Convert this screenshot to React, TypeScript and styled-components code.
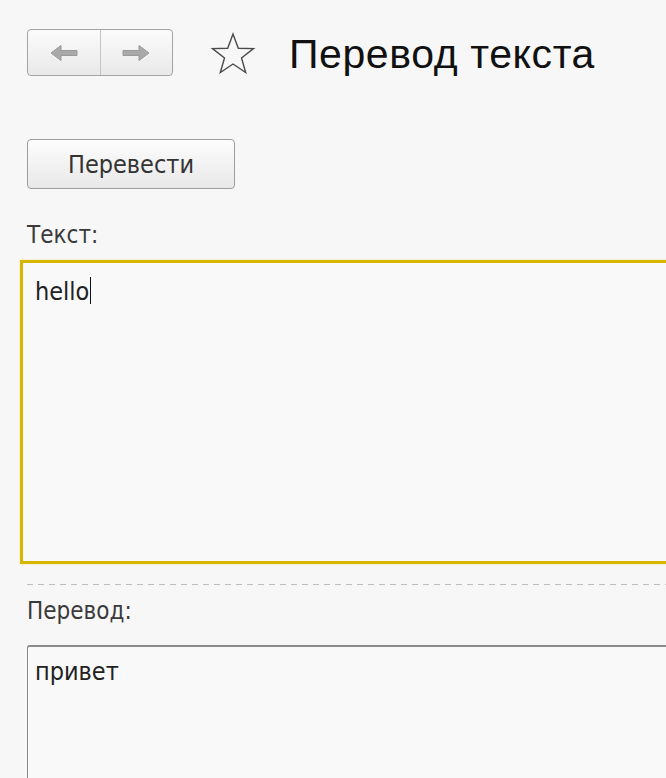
import React from 'react';
import styled, { createGlobalStyle } from 'styled-components';

const GlobalStyle = createGlobalStyle`
  html, body {
    margin: 0;
    padding: 0;
    background: #f7f7f7;
  }
`;

const Page = styled.div`
  width: 666px;
  height: 778px;
  overflow: hidden;
  box-sizing: border-box;
  padding: 29px 0 0 27px;
  font-family: 'DejaVu Sans', 'Liberation Sans', sans-serif;
  font-stretch: condensed;
  color: #333;
`;

const Header = styled.div`
  display: flex;
  align-items: center;
  height: 47px;
`;

const NavGroup = styled.div`
  display: flex;
  width: 146px;
  height: 47px;
  box-sizing: border-box;
  border: 1px solid #a4a4a4;
  border-radius: 4px;
  background: linear-gradient(#fbfbfb, #e9e9e9);
  overflow: hidden;
`;

const NavButton = styled.div<{ $divider?: boolean }>`
  flex: 1;
  display: flex;
  align-items: center;
  justify-content: center;
  border-left: ${(p) => (p.$divider ? '1px solid #c4c4c4' : 'none')};
`;

const StarWrap = styled.div`
  margin-left: 37px;
  display: flex;
  width: 46px;
  height: 42px;
`;

const Title = styled.h1`
  margin: 4px 0 0 33px;
  font-family: 'Liberation Sans', Arial, sans-serif;
  font-stretch: normal;
  font-weight: normal;
  font-size: 41px;
  color: #111;
  letter-spacing: 0.6px;
`;

const ActionButton = styled.button`
  display: block;
  margin-top: 63px;
  width: 208px;
  height: 50px;
  border: 1px solid #9c9c9c;
  border-radius: 4px;
  background: linear-gradient(#fdfdfd, #e8e8e8);
  font-family: inherit;
  font-stretch: condensed;
  font-size: 25px;
  color: #333;
  padding: 0;
`;

const Label = styled.div<{ $top: number }>`
  margin-top: ${(p) => p.$top}px;
  font-size: 24px;
  line-height: 30px;
  color: #3a3a3a;
`;

const Editor = styled.div`
  margin-top: 10px;
  margin-left: -7px;
  width: 700px;
  height: 304px;
  box-sizing: border-box;
  border: 3px solid #d6b600;
  box-shadow: 0 0 2px #f5e690;
  background: #f9f9f9;
  padding: 14px 12px;
  font-size: 25px;
  color: #222;
  display: flex;
  align-items: flex-start;
`;

const Caret = styled.span`
  display: inline-block;
  width: 1px;
  height: 27px;
  margin-left: 1px;
  background: #111;
`;

const Separator = styled.div`
  margin-top: 20px;
  height: 1px;
  background: repeating-linear-gradient(to right, #bdbdbd 0 6px, transparent 6px 11px);
`;

const Output = styled.div`
  margin-top: 19px;
  width: 700px;
  height: 200px;
  box-sizing: border-box;
  border: 1px solid #8a8a8a;
  border-top-width: 2px;
  border-radius: 3px 0 0 0;
  background: #f9f9f9;
  padding: 10px 7px;
  font-size: 25px;
  color: #222;
`;

const ArrowIcon = ({ dir }: { dir: 'left' | 'right' }) => (
  <svg width="30" height="18" viewBox="0 0 30 18">
    <path
      d="M2 9 L12 1.5 L12 6.5 L28 6.5 L28 11.5 L12 11.5 L12 16.5 Z"
      fill="#a9a9a9"
      stroke="#9a9a9a"
      strokeWidth="1"
      strokeLinejoin="round"
      transform={dir === 'right' ? 'translate(30 0) scale(-1 1)' : undefined}
    />
  </svg>
);

const StarIcon = () => (
  <svg width="46" height="42" viewBox="0 0 46 42">
    <path
      d="M23 2 L28.3 16.2 L43.5 16.6 L31.5 25.9 L35.7 40.5 L23 32 L10.3 40.5 L14.5 25.9 L2.5 16.6 L17.7 16.2 Z"
      fill="none"
      stroke="#4a4a4a"
      strokeWidth="1.4"
      strokeLinejoin="miter"
    />
  </svg>
);

export default function App() {
  return (
    <Page>
      <GlobalStyle />
      <Header>
        <NavGroup>
          <NavButton>
            <ArrowIcon dir="left" />
          </NavButton>
          <NavButton $divider>
            <ArrowIcon dir="right" />
          </NavButton>
        </NavGroup>
        <StarWrap>
          <StarIcon />
        </StarWrap>
        <Title>Перевод текста</Title>
      </Header>
      <ActionButton>Перевести</ActionButton>
      <Label $top={31}>Текст:</Label>
      <Editor>
        hello
        <Caret />
      </Editor>
      <Separator />
      <Label $top={11}>Перевод:</Label>
      <Output>привет</Output>
    </Page>
  );
}
